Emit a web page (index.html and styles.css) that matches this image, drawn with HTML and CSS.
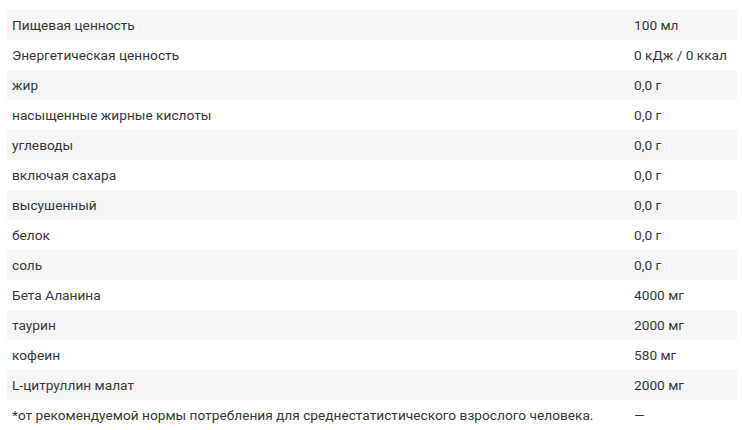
FILE: index.html
```html
<!DOCTYPE html>
<html lang="ru">
<head>
<meta charset="utf-8">
<link rel="stylesheet" href="styles.css">
</head>
<body>
<table class="nutrition">
<tbody>
<tr><td>Пищевая ценность</td><td>100 мл</td></tr>
<tr><td>Энергетическая ценность</td><td>0 кДж / 0 ккал</td></tr>
<tr><td>жир</td><td>0,0 г</td></tr>
<tr><td>насыщенные жирные кислоты</td><td>0,0 г</td></tr>
<tr><td>углеводы</td><td>0,0 г</td></tr>
<tr><td>включая сахара</td><td>0,0 г</td></tr>
<tr><td>высушенный</td><td>0,0 г</td></tr>
<tr><td>белок</td><td>0,0 г</td></tr>
<tr><td>соль</td><td>0,0 г</td></tr>
<tr><td>Бета Аланина</td><td>4000 мг</td></tr>
<tr><td>таурин</td><td>2000 мг</td></tr>
<tr><td>кофеин</td><td>580 мг</td></tr>
<tr><td>L-цитруллин малат</td><td>2000 мг</td></tr>
<tr><td>*от рекомендуемой нормы потребления для среднестатистического взрослого человека.</td><td>—</td></tr>
</tbody>
</table>
</body>
</html>
```
FILE: styles.css
```css
html, body {
  margin: 0;
  background: #fff;
}
body {
  padding: 10px 5px 0 7px;
  font-family: Roboto, "Noto Sans", sans-serif;
  font-size: 13.7px;
  color: #363636;
}
.nutrition {
  width: 730px;
  border-collapse: collapse;
  table-layout: fixed;
}
.nutrition td {
  height: 30px;
  padding: 0 5px;
  box-sizing: border-box;
  vertical-align: middle;
  white-space: nowrap;
}
.nutrition td:first-child {
  width: 622px;
}
.nutrition tr:nth-child(odd) td {
  background: #f5f6f8;
}
```
